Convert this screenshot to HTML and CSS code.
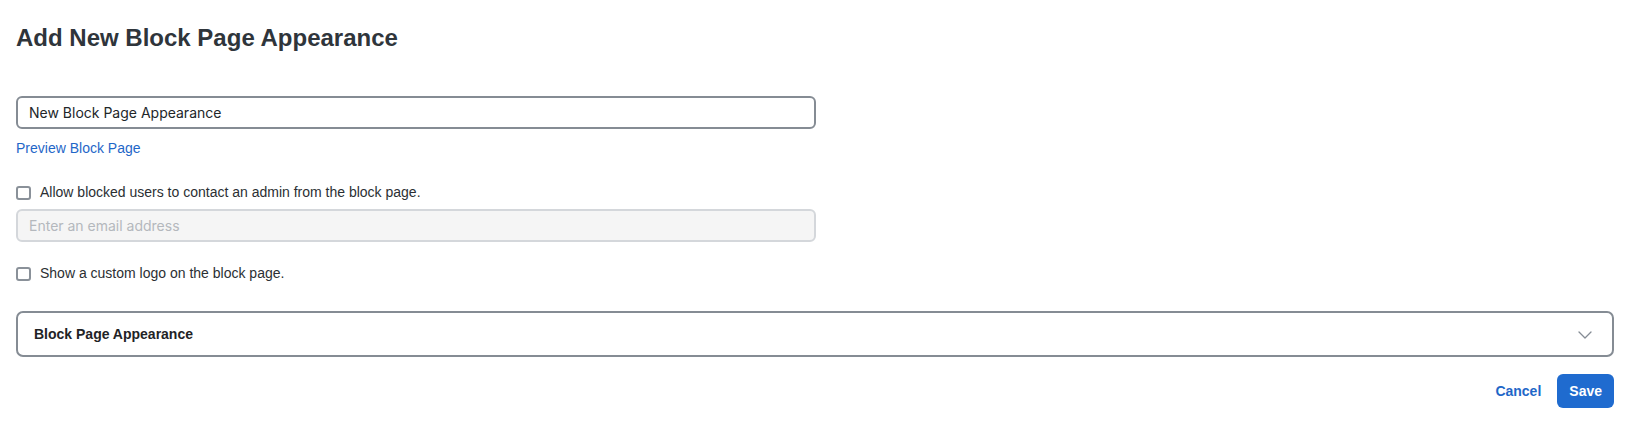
FILE: index.html
```html
<!DOCTYPE html>
<html lang="en">
<head>
<meta charset="utf-8">
<title>Add New Block Page Appearance</title>
<link rel="stylesheet" href="styles.css">
</head>
<body>
<main class="page">
  <h1 class="title">Add New Block Page Appearance</h1>

  <div class="field name-field">
    <input class="text-input" type="text" value="New Block Page Appearance">
  </div>
  <a class="preview-link" href="#">Preview Block Page</a>

  <label class="check-row contact-row">
    <span class="checkbox"></span>
    <span class="check-label">Allow blocked users to contact an admin from the block page.</span>
  </label>
  <div class="field email-field">
    <input class="text-input disabled" type="text" placeholder="Enter an email address" disabled>
  </div>

  <label class="check-row logo-row">
    <span class="checkbox"></span>
    <span class="check-label">Show a custom logo on the block page.</span>
  </label>

  <section class="accordion">
    <span class="accordion-title">Block Page Appearance</span>
    <svg class="chevron" width="14" height="8" viewBox="0 0 14 8" aria-hidden="true">
      <path d="M1 1 L7 7 L13 1" fill="none" stroke="#858c94" stroke-width="1.3" stroke-linecap="round" stroke-linejoin="round"/>
    </svg>
  </section>

  <div class="actions">
    <button class="btn-link" type="button">Cancel</button>
    <button class="btn-primary" type="button">Save</button>
  </div>
</main>
</body>
</html>
```

FILE: styles.css
```css
* { box-sizing: border-box; }

html, body {
  margin: 0;
  background: #ffffff;
}

body {
  font-family: "Liberation Sans", Arial, sans-serif;
  font-size: 14px;
  color: #2b2f33;
}

.page {
  padding: 24px 34px 0 16px;
  display: flex;
  flex-direction: column;
}

.title {
  margin: 0;
  font-size: 24px;
  line-height: 28px;
  font-weight: 700;
  color: #2f353b;
}

.field {
  width: 800px;
}

.name-field {
  margin-top: 44px;
}

.text-input {
  display: block;
  width: 100%;
  height: 33px;
  padding: 0 11px;
  border: 2px solid #858c94;
  border-radius: 6px;
  background: #ffffff;
  font-family: Inter, "Liberation Sans", sans-serif;
  font-size: 14px;
  color: #222629;
  outline: none;
}

.text-input.disabled {
  background: #f5f5f5;
  border-color: #d4d7db;
}

.text-input::placeholder {
  color: #b4b8bd;
}

.preview-link {
  align-self: flex-start;
  margin-top: 9px;
  line-height: 20px;
  color: #1f67c8;
  text-decoration: none;
}

.check-row {
  display: flex;
  align-items: center;
  gap: 9px;
  line-height: 20px;
  color: #2b2f33;
}

.contact-row {
  margin-top: 24px;
}

.email-field {
  margin-top: 7px;
}

.logo-row {
  margin-top: 21px;
}

.checkbox {
  flex: none;
  width: 15px;
  height: 14px;
  margin-top: 2px;
  border: 2px solid #8a9199;
  border-radius: 3px;
  background: #ffffff;
}

.accordion {
  margin-top: 28px;
  height: 46px;
  border: 2px solid #858c94;
  border-radius: 7px;
  display: flex;
  align-items: center;
  justify-content: space-between;
  padding: 0 20px 0 16px;
}

.accordion-title {
  font-weight: 700;
  color: #1f2326;
}

.chevron {
  display: block;
  margin-top: 2px;
}

.actions {
  margin-top: 17px;
  display: flex;
  justify-content: flex-end;
  align-items: center;
  gap: 16px;
}

.btn-link {
  border: 0;
  background: none;
  padding: 0;
  font-family: "Liberation Sans", Arial, sans-serif;
  font-size: 14px;
  font-weight: 700;
  color: #1f67c8;
  cursor: pointer;
}

.btn-primary {
  height: 34px;
  padding: 0 12px;
  border: 0;
  border-radius: 6px;
  background: #1f6bcf;
  color: #ffffff;
  font-family: "Liberation Sans", Arial, sans-serif;
  font-size: 14px;
  font-weight: 700;
  cursor: pointer;
}
```
